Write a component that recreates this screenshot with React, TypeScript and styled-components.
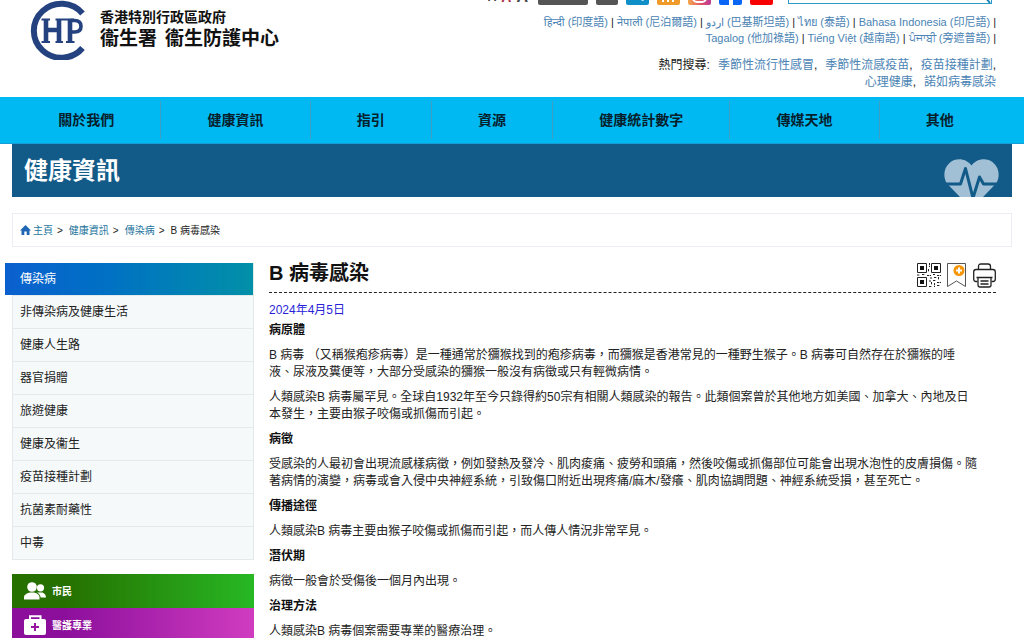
import React from "react";
import styled, { createGlobalStyle } from "styled-components";

const sans = `"Liberation Sans", "Noto Sans CJK TC", "Noto Sans", sans-serif`;

const GlobalStyle = createGlobalStyle`
  * { box-sizing: border-box; }
  html { scrollbar-width: none; }
  body { margin: 0; background: #fff; color: #222; font: 12px/17px ${sans}; }
  a { text-decoration: none; color: inherit; }
  h1, h2, h3, p, ul, ol { margin: 0; padding: 0; }
  ul, ol { list-style: none; }
  button { border: 0; padding: 0; background: none; font: inherit; cursor: pointer; }
`;

const Header = styled.header`
  display: flex;
  justify-content: space-between;
  align-items: flex-start;
  height: 97px;
  padding: 0 28px;
`;

const Logo = styled.a`
  display: flex;
  align-items: center;
  gap: 14px;
  height: 60px;
  color: #111;
  font-weight: 700;
`;

const LogoText = styled.span`
  display: flex;
  flex-direction: column;
`;

const LogoLine = styled.span<{ $large?: boolean }>`
  display: flex;
  gap: 8px;
  white-space: nowrap;
  font-size: ${(p) => (p.$large ? 19 : 14)}px;
  line-height: ${(p) => (p.$large ? 26 : 18)}px;
`;

const Tools = styled.div`
  display: flex;
  flex-direction: column;
  align-items: flex-end;
`;

const ToolRow = styled.div`
  display: flex;
  align-items: flex-end;
  gap: 8px;
  height: 5px;
  overflow: hidden;
  padding-right: 4px;
`;

const SizeButtons = styled.div`
  display: flex;
  align-items: flex-end;
  gap: 5px;
  margin-right: 2px;
`;

const SizeButton = styled.button<{ $size: number; $active?: boolean }>`
  font-size: ${(p) => p.$size}px;
  line-height: 16px;
  font-weight: 700;
  color: ${(p) => (p.$active ? "#b5304a" : "#444")};
`;

const Chip = styled.button<{ $bg: string; $width: number }>`
  width: ${(p) => p.$width}px;
  height: 23px;
  border-radius: 2px;
  background: ${(p) => p.$bg};
`;

const ChipArt = styled.svg`
  display: block;
`;

const Search = styled.form`
  display: flex;
  align-items: flex-end;
  width: 204px;
  height: 24px;
  margin: 0 0 1px 7px;
  border: 1px solid #2e9bc6;
  background: #fff;
`;

const SearchInput = styled.input`
  flex: 1;
  min-width: 0;
  height: 20px;
  border: 0;
  background: transparent;
`;

const Languages = styled.div`
  max-width: 480px;
  margin-top: 9px;
  text-align: right;
  font-size: 11px;
  line-height: 16px;
`;

const HotSearches = styled.div`
  display: flex;
  flex-wrap: wrap;
  justify-content: flex-end;
  gap: 0 8px;
  max-width: 352px;
  margin-top: 11px;
`;

const BlueLink = styled.a`
  color: #4a83b4;
  white-space: nowrap;
`;

const NavBar = styled.nav`
  background: #00b8f2;
  border-bottom: 1px solid #14a0d6;
  padding: 0 24px 0 12px;
`;

const NavList = styled.ul`
  display: flex;
  height: 46px;
  padding: 4px 0;
`;

const NavItem = styled.li`
  flex: 1 1 auto;
  text-align: center;
  border-right: 1px solid #3f9fc0;
  &:last-child { border-right: 0; }
`;

const NavLink = styled.a`
  display: block;
  padding: 0 40px;
  white-space: nowrap;
  font-size: 14px;
  line-height: 38px;
  font-weight: 700;
  color: #06202c;
`;

const Banner = styled.div`
  display: flex;
  justify-content: space-between;
  align-items: flex-start;
  height: 53px;
  margin: 0 12px;
  padding: 0 12px;
  overflow: hidden;
  background: #125b88;
`;

const BannerTitle = styled.h2`
  font-size: 24px;
  line-height: 54px;
  color: #fff;
`;

const HeartArt = styled.svg`
  margin-top: 15px;
`;

const Crumbs = styled.nav`
  margin: 16px 12px;
  border: 1px solid #ececf4;
  padding: 0 7px;
`;

const CrumbList = styled.ol`
  display: flex;
  align-items: center;
  gap: 6px;
  height: 32px;
  font-size: 10px;
  color: #222;
`;

const Crumb = styled.li`
  display: flex;
  align-items: center;
  gap: 4px;
`;

const CrumbLink = styled.a`
  display: flex;
  align-items: center;
  gap: 2px;
  color: #23749c;
`;

const Columns = styled.div`
  display: grid;
  grid-template-columns: 242px minmax(0, 1fr);
  gap: 15px;
  padding: 0 28px 0 12px;
`;

const SideMenu = styled.ul`
  margin-bottom: 14px;
`;

const SideItem = styled.li<{ $active?: boolean }>`
  border: solid #e3eaec;
  border-width: ${(p) => (p.$active ? "0 1px" : "1px 1px 0")};
  background: #f5f9fa;
  &:last-child { border-bottom-width: 1px; }
`;

const SideLink = styled.a<{ $active?: boolean }>`
  display: block;
  margin: ${(p) => (p.$active ? "0 0 0 -8px" : "0")};
  padding: 0 ${(p) => (p.$active ? 15 : 7)}px;
  line-height: 32px;
  color: ${(p) => (p.$active ? "#fff" : "#222")};
  background: ${(p) => (p.$active ? "linear-gradient(90deg, #0a60cf, #0070c4 40%, #0290a8)" : "none")};
`;

const Audience = styled.a<{ $from: string; $to: string }>`
  display: flex;
  align-items: center;
  gap: 6px;
  height: 34px;
  padding: 0 12px;
  color: #fff;
  font-size: 10px;
  font-weight: 700;
  background: linear-gradient(90deg, ${(p) => p.$from} 22%, ${(p) => p.$to});
`;

const TitleRow = styled.div`
  display: flex;
  justify-content: space-between;
  align-items: flex-start;
  height: 30px;
  margin-bottom: 9px;
  border-bottom: 1px dashed #222;
`;

const Title = styled.h1`
  font-size: 20px;
  line-height: 20px;
  color: #111;
`;

const Actions = styled.div`
  display: flex;
  gap: 6px;
`;

const ActionButton = styled.button`
  display: flex;
`;

const DateLine = styled.p`
  margin-bottom: 3px;
  color: #2a1fd8;
`;

const Section = styled.section`
  padding-right: 18px;
`;

const Heading = styled.h3`
  margin-bottom: 8px;
  font-size: 12px;
  line-height: 17px;
  color: #111;
`;

const Paragraph = styled.p`
  margin-bottom: 8px;
`;

const languages = [
  "हिन्दी (印度語)",
  "नेपाली (尼泊爾語)",
  "اردو (巴基斯坦語)",
  "ไทย (泰語)",
  "Bahasa Indonesia (印尼語)",
  "Tagalog (他加祿語)",
  "Tiếng Việt (越南語)",
  "ਪੰਜਾਬੀ (旁遮普語)",
];

const searches = ["季節性流行性感冒", "季節性流感疫苗", "疫苗接種計劃", "心理健康", "諾如病毒感染"];

const navItems = ["關於我們", "健康資訊", "指引", "資源", "健康統計數字", "傳媒天地", "其他"];

const sideItems = [
  "傳染病",
  "非傳染病及健康生活",
  "健康人生路",
  "器官捐贈",
  "旅遊健康",
  "健康及衞生",
  "疫苗接種計劃",
  "抗菌素耐藥性",
  "中毒",
];

const sections = [
  {
    heading: "病原體",
    paragraphs: [
      "B 病毒 （又稱猴疱疹病毒）是一種通常於獼猴找到的疱疹病毒，而獼猴是香港常見的一種野生猴子。B 病毒可自然存在於獼猴的唾液、尿液及糞便等，大部分受感染的獼猴一般沒有病徵或只有輕微病情。",
      "人類感染B 病毒屬罕見。全球自1932年至今只錄得約50宗有相關人類感染的報告。此類個案曾於其他地方如美國、加拿大、內地及日本發生，主要由猴子咬傷或抓傷而引起。",
    ],
  },
  {
    heading: "病徵",
    paragraphs: [
      "受感染的人最初會出現流感樣病徵，例如發熱及發冷、肌肉痠痛、疲勞和頭痛，然後咬傷或抓傷部位可能會出現水泡性的皮膚損傷。隨著病情的演變，病毒或會入侵中央神經系統，引致傷口附近出現疼痛/麻木/發癢、肌肉協調問題、神經系統受損，甚至死亡。",
    ],
  },
  { heading: "傳播途徑", paragraphs: ["人類感染B 病毒主要由猴子咬傷或抓傷而引起，而人傳人情況非常罕見。"] },
  { heading: "潛伏期", paragraphs: ["病徵一般會於受傷後一個月內出現。"] },
  { heading: "治理方法", paragraphs: ["人類感染B 病毒個案需要專業的醫療治理。"] },
];

const ChpMark = () => (
  <svg width="58" height="60" viewBox="2 0 58 60" fill="none" stroke="#24427f" aria-hidden="true">
    <path d="M56.500 13.500A27.500 27 0 1 0 56.500 48" strokeWidth="6" />
    <g transform="translate(3 0)">
      <path d="M17 19V42M30 19V42M17 30H30M41 19V42" strokeWidth="4.600" />
      <path d="M41 20.500H45.500Q52 20.500 52 26.200T45.500 32H41" strokeWidth="3.600" />
      <path d="M12.500 19.500H21M12.500 42H21M26.500 19.500H45M26.500 42H34M37 42H45.500" strokeWidth="2" />
    </g>
  </svg>
);

const HomeIcon = () => (
  <svg width="11" height="10" viewBox="0 0 11 10" fill="#1f66b5" aria-hidden="true">
    <path d="M5.500 0 11 5.400H9.500V10H6.700V6.500H4.300V10H1.500V5.400H0Z" />
  </svg>
);

const HeartIcon = () => (
  <HeartArt width="56" height="54" viewBox="0 0 56 54" aria-hidden="true">
    <path d="M27.500 6.500C22 -1 12 -1.500 6 3.500C-.5 9 -1 17 2.500 24L27.500 50L52.500 24C56 17 55.500 9 49 3.500C43 -1.500 33 -1 27.500 6.500Z" fill="#a1bfd5" />
    <path d="M0 25H16.500L21.500 9.500L29 39L35.500 18L39.500 25H56" fill="none" stroke="#125b88" strokeWidth="3" strokeLinejoin="round" />
  </HeartArt>
);

const QrIcon = () => (
  <svg width="24" height="25" viewBox="0 0 24 25" fill="none" stroke="#222" aria-hidden="true">
    <path d="M.5.500H9.500V9.500H.5ZM14.500.500H23.500V9.500H14.500ZM.5 14.500H9.500V23.500H.5Z" />
    <path d="M3 3H7V7H3ZM17 3H21V7H17ZM3 17H7V21H3Z" fill="#111" stroke="none" />
    <path d="M12.500 0V4M11.500 6V9M0 12H3M5 11.500H8M10 12.500H14M16 11.500H18M20 12.500H24M13 15H15M17 14.500H20M21.500 14V17M12 18H14M16 17.500H19M14.500 19V22M17.500 20V24M20 19.500H24M12 23.500H15M20 22.500H23" strokeDasharray="2 .7" />
  </svg>
);

const BookmarkIcon = () => (
  <svg width="20" height="25" viewBox="0 0 20 25" fill="none" aria-hidden="true">
    <path d="M.5.500H18.500V23.500L9.500 18L.5 23.500Z" stroke="#555" />
    <circle cx="12" cy="7.500" r="5.500" fill="#f7950a" />
    <path d="M12 4.500V10.500M9 7.500H15" stroke="#fff" strokeWidth="2" />
  </svg>
);

const PrinterIcon = () => (
  <svg width="23" height="25" viewBox="0 0 23 25" fill="none" stroke="#222" strokeWidth="1.300" aria-hidden="true">
    <path d="M5.500 6.500V3.500Q5.500 1 8 1H15Q17.500 1 17.500 3.500V6.500" />
    <path d="M4.500 18.500H3Q.7 18.500.7 16V9Q.7 6.500 3 6.500H20Q22.300 6.500 22.300 9V16Q22.300 18.500 20 18.500H18.500" />
    <path d="M3.500 14.500H19.500M5 14.500V22Q5 24 7 24H16Q18 24 18 22V14.500M7.500 18H15.500M7.500 21H15.500" />
  </svg>
);

const PeopleIcon = () => (
  <svg width="22" height="18" viewBox="0 0 22 18" fill="#fff" aria-hidden="true">
    <circle cx="8" cy="5" r="4.800" />
    <circle cx="16.500" cy="5.800" r="3.600" />
    <path d="M0 17.500V15Q0 12 6 10.500H10Q15.500 12 15.500 15V17.500Z" />
    <path d="M13 10.500H18.500Q22 12 22 15.500H16.600Q16.500 12.500 13 10.500Z" />
  </svg>
);

const MedicalIcon = () => (
  <svg width="22" height="20" viewBox="0 0 22 20" aria-hidden="true">
    <path d="M6 5V1.200H16.500V5" fill="none" stroke="#fff" strokeWidth="2" />
    <rect y="4" width="22" height="16" rx="2" fill="#fff" />
    <path d="M11 8V16M7 12H15" stroke="#9a14a4" strokeWidth="2" />
  </svg>
);

const socials = [
  { label: "Twitter", bg: "#0f8fc8", art: <path d="M14 17Q17 20 19 17" stroke="#fff" fill="none" /> },
  { label: "RSS", bg: "#f09a2a", art: <path d="M6 14V20M11 12V20M16 10V20" stroke="#fff" strokeWidth="2" /> },
  {
    label: "Instagram",
    bg: "linear-gradient(90deg, #f5a84e, #e0506a 60%, #b83a9a)",
    art: <rect x="5" y="4" width="13" height="16" rx="4" stroke="#fff" strokeWidth="2" fill="none" />,
  },
  { label: "Facebook", bg: "#0b66f5", art: <path d="M12 8V23" stroke="#fff" strokeWidth="4" /> },
  { label: "YouTube", bg: "#f80000", art: null },
];

export default function App() {
  return (
    <>
      <GlobalStyle />
      <Header>
        <Logo href="#">
          <ChpMark />
          <LogoText>
            <LogoLine>香港特別行政區政府</LogoLine>
            <LogoLine $large>
              <span>衞生署</span>
              <span>衞生防護中心</span>
            </LogoLine>
          </LogoText>
        </Logo>
        <Tools>
          <ToolRow>
            <SizeButtons>
              <SizeButton $size={12} aria-label="小字體">A</SizeButton>
              <SizeButton $size={14} $active aria-label="中字體">A</SizeButton>
              <SizeButton $size={16} aria-label="大字體">A</SizeButton>
            </SizeButtons>
            <Chip $bg="#555" $width={50} aria-label="English" />
            <Chip $bg="#555" $width={22} aria-label="简体" />
            {socials.map((s) => (
              <Chip key={s.label} $bg={s.bg} $width={23} aria-label={s.label}>
                <ChipArt width="23" height="23" viewBox="0 0 23 23">{s.art}</ChipArt>
              </Chip>
            ))}
            <Search>
              <SearchInput aria-label="搜尋" />
              <button type="submit" aria-label="提交搜尋">
                <ChipArt width="12" height="14" viewBox="0 0 12 14" fill="none" stroke="#1a86b8" strokeWidth="2">
                  <circle cx="5" cy="6" r="4" />
                  <path d="M7 9L11 14" />
                </ChipArt>
              </button>
            </Search>
          </ToolRow>
          <Languages>
            {languages.map((l) => (
              <React.Fragment key={l}>
                <BlueLink href="#">{l}</BlueLink>
                {" | "}
              </React.Fragment>
            ))}
          </Languages>
          <HotSearches>
            <span>熱門搜尋:</span>
            {searches.map((s, i) => (
              <span key={s}>
                <BlueLink href="#">{s}</BlueLink>
                {i < searches.length - 1 && ","}
              </span>
            ))}
          </HotSearches>
        </Tools>
      </Header>
      <NavBar>
        <NavList>
          {navItems.map((n) => (
            <NavItem key={n}>
              <NavLink href="#">{n}</NavLink>
            </NavItem>
          ))}
        </NavList>
      </NavBar>
      <Banner>
        <BannerTitle>健康資訊</BannerTitle>
        <HeartIcon />
      </Banner>
      <Crumbs>
        <CrumbList>
          <Crumb>
            <CrumbLink href="#">
              <HomeIcon />
              主頁
            </CrumbLink>
            &gt;
          </Crumb>
          <Crumb>
            <CrumbLink href="#">健康資訊</CrumbLink>&gt;
          </Crumb>
          <Crumb>
            <CrumbLink href="#">傳染病</CrumbLink>&gt;
          </Crumb>
          <Crumb>B 病毒感染</Crumb>
        </CrumbList>
      </Crumbs>
      <Columns>
        <aside>
          <SideMenu>
            {sideItems.map((s, i) => (
              <SideItem key={s} $active={i === 0}>
                <SideLink href="#" $active={i === 0}>{s}</SideLink>
              </SideItem>
            ))}
          </SideMenu>
          <Audience href="#" $from="#267000" $to="#27b824">
            <PeopleIcon />
            市民
          </Audience>
          <Audience href="#" $from="#8c0f9c" $to="#d03cc0">
            <MedicalIcon />
            醫護專業
          </Audience>
        </aside>
        <main>
          <TitleRow>
            <Title>B 病毒感染</Title>
            <Actions>
              <ActionButton aria-label="二維碼"><QrIcon /></ActionButton>
              <ActionButton aria-label="加入書籤"><BookmarkIcon /></ActionButton>
              <ActionButton aria-label="列印"><PrinterIcon /></ActionButton>
            </Actions>
          </TitleRow>
          <DateLine>2024年4月5日</DateLine>
          {sections.map((s) => (
            <Section key={s.heading}>
              <Heading>{s.heading}</Heading>
              {s.paragraphs.map((p) => (
                <Paragraph key={p}>{p}</Paragraph>
              ))}
            </Section>
          ))}
        </main>
      </Columns>
    </>
  );
}
